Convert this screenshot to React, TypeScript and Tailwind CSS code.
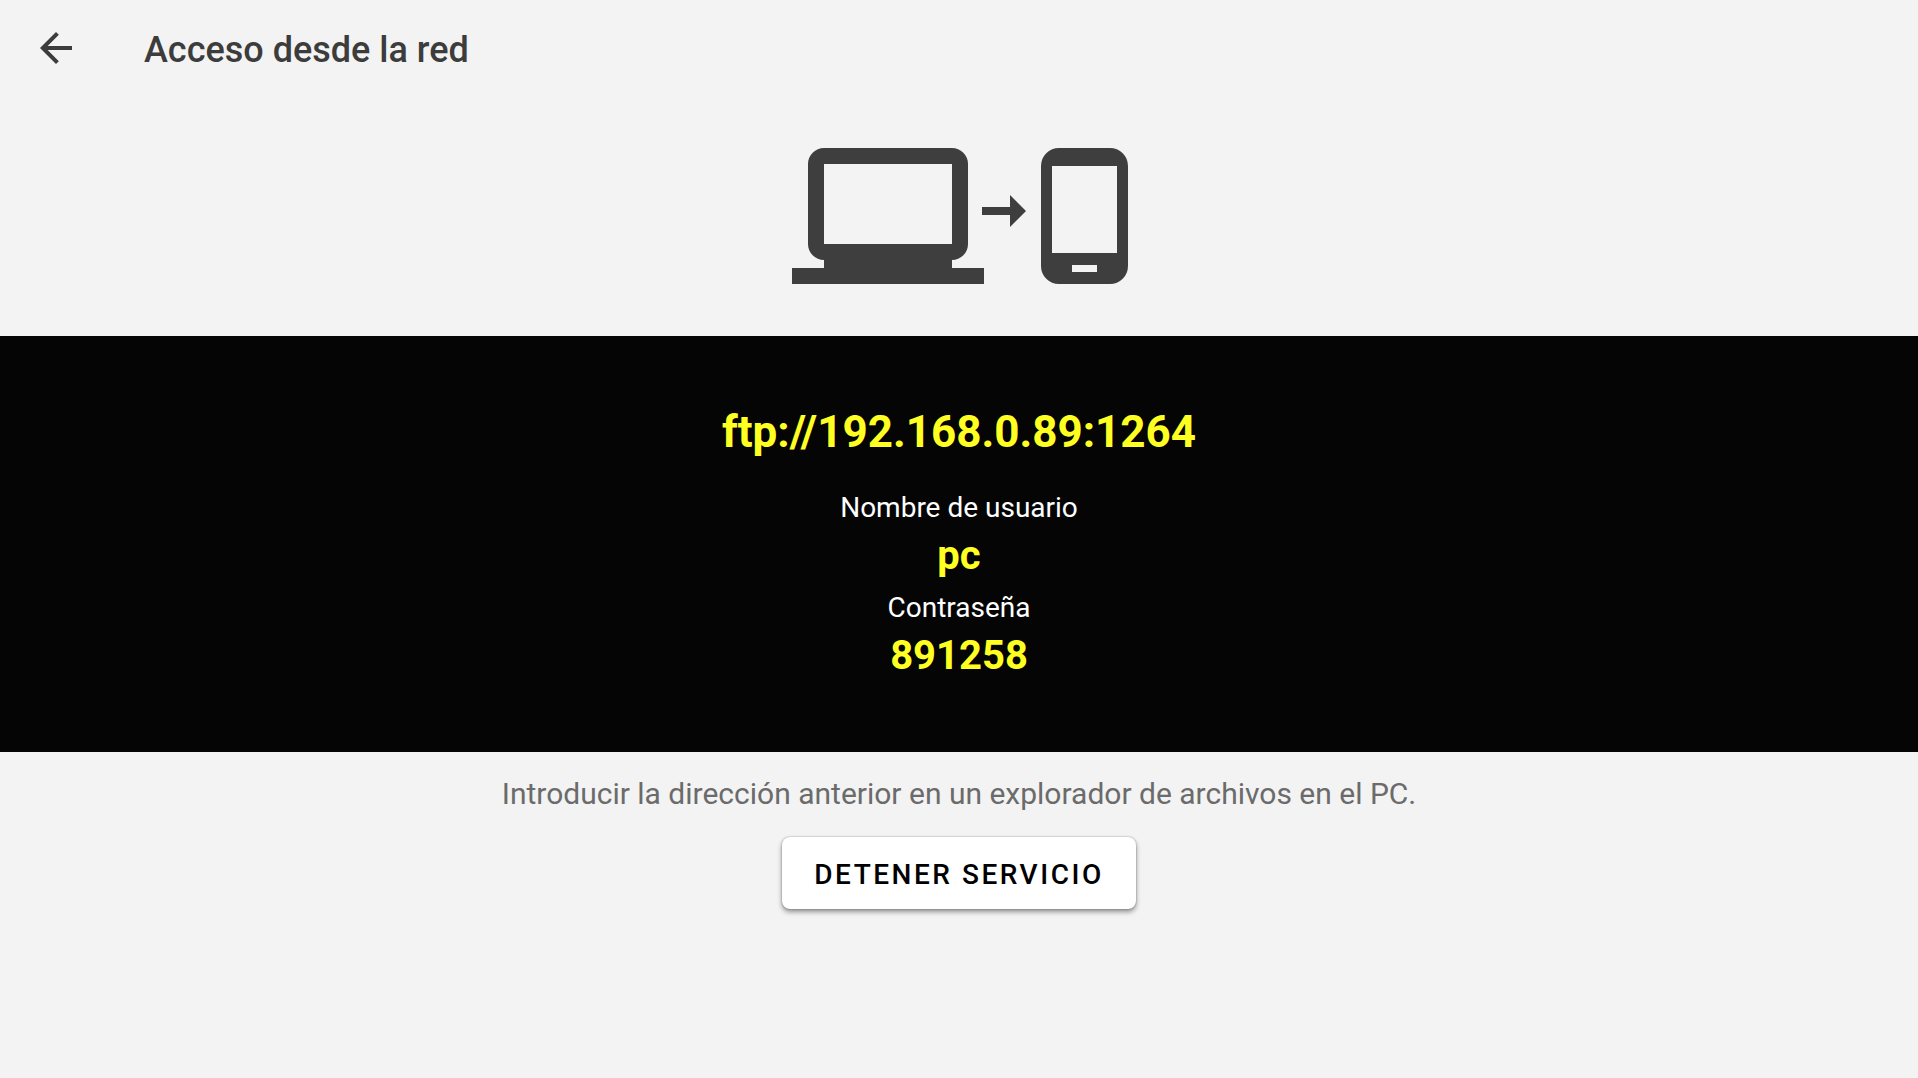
export default function App() {
  return (
    <div className="flex min-h-screen flex-col bg-[#f3f3f3] font-['Roboto',sans-serif]">
      <header className="flex h-24 items-center gap-16 px-8">
        <button type="button" aria-label="Atrás" className="flex size-12 items-center justify-center text-[#3c3c3c]">
          <svg viewBox="0 0 24 24" className="size-12" fill="currentColor">
            <path d="M20 11H7.83l5.59-5.59L12 4l-8 8 8 8 1.41-1.41L7.83 13H20v-2z" />
          </svg>
        </button>
        <h1 className="pt-1 text-[36px] font-medium leading-12 text-[#3c3c3c]">Acceso desde la red</h1>
      </header>
      <main className="flex flex-col items-center">
        <div className="flex h-60 w-full justify-center pt-[52px]">
          <svg viewBox="-2 0 338 136" className="h-[136px] w-[338px]" fill="#3e3e3e" aria-hidden="true">
            <path fillRule="evenodd" d="M32 0H160a16 16 0 0 1 16 16V96a16 16 0 0 1-16 16V120H192V136H0V120H32V112a16 16 0 0 1-16-16V16A16 16 0 0 1 32 0ZM32 16V96H160V16Z" />
            <path d="M190 59H218V47L234 63L218 79V67H190Z" />
            <path fillRule="evenodd" d="M267 0H318a18 18 0 0 1 18 18V118a18 18 0 0 1-18 18H267a18 18 0 0 1-18-18V18A18 18 0 0 1 267 0ZM260 18V105H325V18ZM280 117V124H305V117Z" />
          </svg>
        </div>
        <section className="flex h-[416px] w-full flex-col items-center bg-[#050505] pt-16 text-center">
          <p className="text-[44px] font-bold leading-16 text-[#ffff22]">ftp://192.168.0.89:1264</p>
          <dl className="mt-6">
            <dt className="text-[28px] leading-10 text-white">Nombre de usuario</dt>
            <dd className="mb-1 text-[40px] font-bold leading-14 text-[#ffff22]">pc</dd>
            <dt className="text-[28px] leading-10 text-white">Contraseña</dt>
            <dd className="text-[40px] font-bold leading-14 text-[#ffff22]">891258</dd>
          </dl>
        </section>
        <p className="mt-5 text-[30px] leading-11 text-[#6b6b6b]">Introducir la dirección anterior en un explorador de archivos en el PC.</p>
        <button type="button" className="mt-[21px] rounded-lg bg-white px-8 pt-[18px] pb-[14px] text-[28px] font-medium leading-10 tracking-[0.09em] text-black shadow-[0_3px_5px_rgba(0,0,0,0.4),0_0_2px_rgba(0,0,0,0.35)]">DETENER SERVICIO</button>
      </main>
    </div>
  );
}
